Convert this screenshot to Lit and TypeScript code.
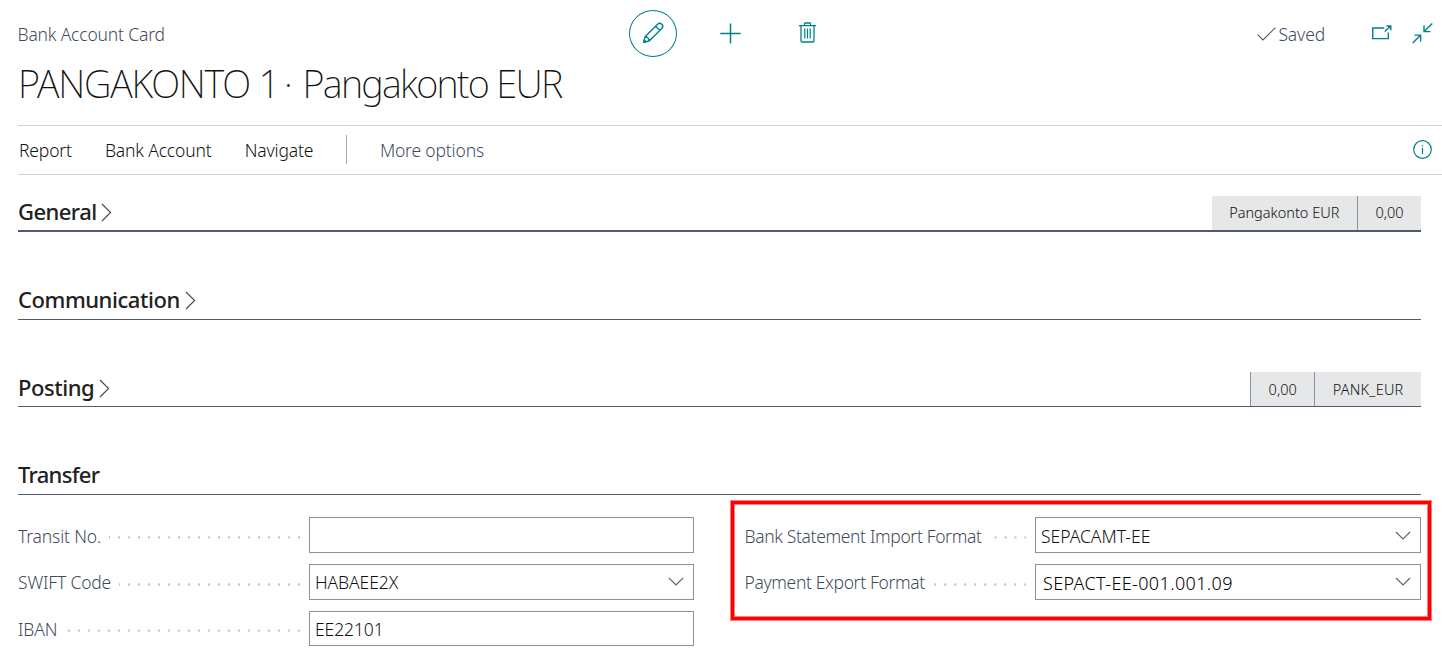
import { LitElement, html, css, nothing } from "lit";

const chevronRight = html`<svg class="chev-r" width="11" height="19" viewBox="0 0 11 19" fill="none" stroke="#444" stroke-width="1.1"><path d="M1 1 L9.6 9.5 L1 18" /></svg>`;
const chevronDown = html`<svg class="chev-d" width="16" height="10" viewBox="0 0 16 10" fill="none" stroke="#5a6270" stroke-width="1.1"><path d="M1 1 L8 8 L15 1" /></svg>`;

class FastTab extends LitElement {
  static properties = {
    label: {},
    open: { type: Boolean },
    thick: { type: Boolean },
    chips: { attribute: false },
  };
  declare label: string;
  declare open: boolean;
  declare thick: boolean;
  declare chips: string[];

  static styles = css`
    :host { display: block; }
    .bar {
      display: flex;
      box-sizing: border-box;
      height: 100%;
      justify-content: space-between;
      align-items: flex-end;
      border-bottom: 1px solid #505c6d;
    }
    .bar.thick { border-bottom-width: 2px; }
    .title {
      display: flex;
      align-items: center;
      gap: 5px;
      height: 38px;
      font-size: 22px;
      font-weight: 550;
      letter-spacing: -0.45px;
      color: #212121;
      white-space: nowrap;
    }
    .thick .title { gap: 4px; letter-spacing: -0.55px; }
    .bare .title { height: 40px; }
    .open .title { letter-spacing: -0.7px; }
    .chev-r { margin-top: 2px; }
    .chips { display: flex; height: 34px; }
    .chip {
      display: flex;
      align-items: center;
      padding: 0 17.5px;
      background: #e6e7e8;
      font-size: 14.5px;
      font-weight: 300;
      color: #111;
      border-left: 1px solid #8b929b;
      box-sizing: border-box;
      white-space: nowrap;
    }
    .thick .chip:first-child { border-left: 0; }
    .bar:not(.thick) .chip { padding-top: 2px; }
    .bar:not(.thick) .chip:last-child { letter-spacing: 0.22px; }
  `;
  render() {
    return html`<div class="bar ${this.thick ? "thick" : ""} ${this.chips ? "" : "bare"} ${this.open ? "open" : ""}">
      <div class="title"><span>${this.label}</span>${this.open ? nothing : chevronRight}</div>
      <div class="chips">${(this.chips ?? []).map((c) => html`<div class="chip">${c}</div>`)}</div>
    </div>`;
  }
}
customElements.define("fast-tab", FastTab);

class FormField extends LitElement {
  static properties = {
    label: {},
    value: {},
    lookup: { type: Boolean },
    edited: { type: Boolean },
    first: { type: Boolean, reflect: true },
  };
  declare label: string;
  declare value: string;
  declare lookup: boolean;
  declare edited: boolean;
  declare first: boolean;

  static styles = css`
    :host { display: flex; }
    .caption {
      display: flex;
      align-items: center;
      width: 291px;
      box-sizing: border-box;
      padding: 1px 9px 0 0;
      gap: 8px;
      font-size: 17.5px;
      font-weight: 300;
      letter-spacing: -0.17px;
      color: #3f4b5d;
      white-space: nowrap;
    }
    .caption.long { letter-spacing: -0.36px; padding-left: 0.5px; }
    :host([first]) .caption { padding-top: 3px; }
    .dots {
      flex: 1;
      height: 3px;
      margin-top: 3px;
      background: radial-gradient(circle at 9.3px 1.5px, #bfc1c4 0.9px, transparent 1.5px) right 0 top 0 / 10px 3px repeat-x;
    }
    :host([first]) .dots { margin-top: 1px; }
    .box {
      flex: 1;
      display: flex;
      align-items: center;
      justify-content: space-between;
      box-sizing: border-box;
      border: 1px solid #8a929e;
      padding: 1px 9px 0 5px;
      font-size: 17.5px;
      font-weight: 300;
      letter-spacing: -0.1px;
      color: #111;
      white-space: nowrap;
    }
    :host([first]) .box { padding-top: 2px; letter-spacing: 0; }
    .box.edited { font-size: 18px; letter-spacing: 0.36px; color: #000; padding: 3px 9px 0 7px; }
    .chev-d { margin-bottom: 1px; }
    :host([first]) .chev-d { margin-bottom: 0; }
    .edited .chev-d { margin-bottom: 3px; }
  `;
  render() {
    return html`<div class="caption ${this.label.length > 15 ? "long" : ""}"><span>${this.label}</span><span class="dots"></span></div>
      <div class="box ${this.edited ? "edited" : ""}"><span>${this.value}</span>${this.lookup ? chevronDown : nothing}</div>`;
  }
}
customElements.define("form-field", FormField);

class AppRoot extends LitElement {
  static styles = css`
    :host {
      display: block;
      position: relative;
      width: 1442px;
      height: 654px;
      overflow: hidden;
      background: #fff;
      color: #212121;
      font-family: "Noto Sans", "Open Sans", sans-serif;
      line-height: 1.2;
    }
    .top {
      display: grid;
      grid-template-columns: 629px 1fr auto;
      height: 66px;
      padding: 0 9px 0 0;
      align-items: center;
    }
    .crumb { padding: 3px 0 0 17.5px; font-size: 17.5px; font-weight: 300; letter-spacing: -0.18px; color: #3f4b5d; }
    .actions { display: flex; align-items: center; }
    .edit {
      display: flex;
      align-items: center;
      justify-content: center;
      box-sizing: border-box;
      width: 48px;
      height: 47px;
      border: 1px solid #008089;
      border-radius: 50%;
    }
    .plus { margin-left: 43px; }
    .trash { margin-left: 58px; margin-bottom: 1px; }
    .status { display: flex; align-items: center; color: #3f4b5d; font-size: 17.5px; font-weight: 300; }
    .check { margin-top: 1px; }
    .saved { padding: 3px 0 0 2px; letter-spacing: -0.15px; }
    .popout { margin-left: 47px; margin-bottom: 1px; }
    .shrink { margin-left: 20px; }
    .heading {
      display: flex;
      height: 59px;
      box-sizing: border-box;
      padding: 0 0 0 18px;
      font-size: 38px;
      line-height: 34px;
      font-weight: 200;
      color: #111;
      white-space: nowrap;
    }
    .no { letter-spacing: -1.2px; width: 266px; }
    .dot { width: 18.5px; }
    .name { letter-spacing: -1.72px; }
    .menu {
      display: flex;
      align-items: center;
      margin-left: 18px;
      box-sizing: border-box;
      height: 50px;
      border-top: 1px solid #d0d2d5;
      border-bottom: 1px solid #d0d2d5;
      font-size: 17.5px;
      font-weight: 300;
      letter-spacing: -0.17px;
      color: #111;
      padding: 0 10px 1px 1px;
    }
    .menu span { padding-top: 2px; margin-right: 33.2px; }
    .rule { width: 1px; height: 29px; background: #a0a6b0; margin-right: 32.5px; }
    .menu .more { color: #3f4b5d; margin-right: auto; }
    .tabs { display: grid; grid-template-rows: 57px 88px 87px 88px; width: 1403px; margin-left: 18px; }
    .form { display: grid; grid-template-columns: 676px 677px; column-gap: 50px; margin: 22px 0 0 18px; }
    .col { display: grid; grid-template-rows: 36px 36px 35px; row-gap: 11px; }
    .callout {
      position: absolute;
      left: 731px;
      top: 501px;
      width: 700px;
      height: 119px;
      box-sizing: border-box;
      border: 3px solid #f00;
      box-shadow: 0 0 0 1px rgba(255, 0, 0, 0.5), inset 0 0 0 1px rgba(255, 0, 0, 0.5);
    }
  `;

  render() {
    return html`
      <header class="top">
        <div class="crumb">Bank Account Card</div>
        <div class="actions">
          <div class="edit">
            <svg width="22" height="22" viewBox="0 0 22 22" fill="none" stroke="#008089" stroke-width="1.4" stroke-linejoin="round">
              <path d="M1.8 20.2 L3 14.8 L15.6 2.2 A2.9 2.9 0 0 1 19.8 6.4 L7.2 19 Z M3 14.8 C5 14.6 7.4 16.8 7.2 19 M13.6 4.2 L17.8 8.4" />
              <path d="M1.8 20.2 L2.3 18 L4 19.7 Z" fill="#008089" />
            </svg>
          </div>
          <svg class="plus" width="21" height="21" viewBox="0 0 21 21" fill="none" stroke="#008089" stroke-width="1.5"><path d="M10.5 0.5 V20.5 M0.3 10.5 H20.7" /></svg>
          <svg class="trash" width="17" height="21" viewBox="0 0 17 21" fill="none" stroke="#008089">
            <path stroke-width="1.3" d="M0 3.6 H17 M5.5 3.4 V1.6 Q5.5 1 6.1 1 H10.9 Q11.5 1 11.5 1.6 V3.4 M2 3.6 V18.8 Q2 20 3.2 20 H13.8 Q15 20 15 18.8 V3.6" />
            <path stroke-width="1.2" d="M5.8 6.5 V16.5 M8.5 6.5 V16.5 M11.2 6.5 V16.5" />
          </svg>
        </div>
        <div class="status">
          <svg class="check" width="19" height="14" viewBox="0 0 19 14" fill="none" stroke="#505c6d" stroke-width="1.1"><path d="M0.6 7.6 L6 13 L18.4 0.6" /></svg>
          <span class="saved">Saved</span>
          <svg class="popout" width="20" height="15" viewBox="0 0 20 15" fill="none" stroke="#008089" stroke-width="1.4">
            <path d="M12.2 3 H0.7 V13.6 H16.3 V7.5 M12.8 6.5 L18.2 1.4 M14.5 1 H18.8 V5.2" />
            <path d="M16 1 H18.8 V4 Z" fill="#008089" stroke="none" />
          </svg>
          <svg class="shrink" width="21" height="21" viewBox="0 0 21 21" fill="none" stroke="#008089" stroke-width="1.4">
            <path d="M20.3 0.5 L12 8.6 M12 2.6 V8.6 H18.4 M0.7 20 L8.6 12.1 M2.4 12.1 H8.6 V18.4" />
          </svg>
        </div>
      </header>
      <div class="heading"><span class="no">PANGAKONTO 1</span><span class="dot">·</span><span class="name">Pangakonto EUR</span></div>
      <nav class="menu">
        <span>Report</span><span>Bank Account</span><span>Navigate</span>
        <div class="rule"></div>
        <span class="more">More options</span>
        <svg width="19" height="19" viewBox="0 0 19 19" fill="none" stroke="#008089" stroke-width="1.2">
          <circle cx="9.5" cy="9.5" r="8.8" /><path d="M9.5 8 V14 M9.5 5.2 V6.6" />
        </svg>
      </nav>
      <section class="tabs">
        <fast-tab label="General" thick .chips=${["Pangakonto EUR", "0,00"]}></fast-tab>
        <fast-tab label="Communication"></fast-tab>
        <fast-tab label="Posting" .chips=${["0,00", "PANK_EUR"]}></fast-tab>
        <fast-tab label="Transfer" open></fast-tab>
      </section>
      <section class="form">
        <div class="col">
          <form-field first label="Transit No." value=""></form-field>
          <form-field label="SWIFT Code" value="HABAEE2X" lookup></form-field>
          <form-field label="IBAN" value="EE22101"></form-field>
        </div>
        <div class="col">
          <form-field first label="Bank Statement Import Format" value="SEPACAMT-EE" lookup></form-field>
          <form-field label="Payment Export Format" value="SEPACT-EE-001.001.09" lookup edited></form-field>
        </div>
      </section>
      <div class="callout"></div>
    `;
  }
}
customElements.define("app-root", AppRoot);
